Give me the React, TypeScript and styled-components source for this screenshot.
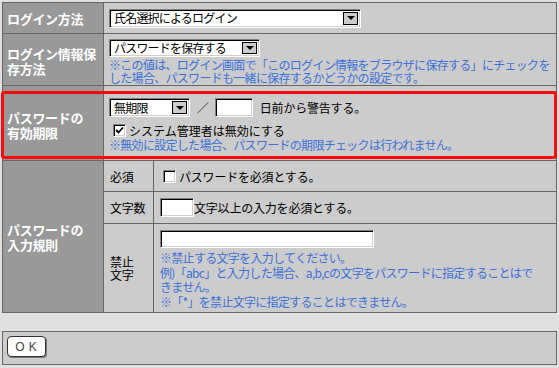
import React from "react";
import styled, { createGlobalStyle } from "styled-components";

const GlobalStyle = createGlobalStyle`
  html, body {
    margin: 0;
    padding: 0;
    background: #e0e0e0;
  }
  body {
    font-family: "Noto Sans CJK JP", "Liberation Sans", sans-serif;
    font-size: 12px;
    color: #000;
  }
`;

const Page = styled.div`
  position: relative;
  width: 555px;
  padding: 2px 2px 0 2px;
`;

const SettingsTable = styled.div`
  display: grid;
  grid-template-columns: 100px 49px 1fr;
  grid-template-rows: 30px 51px 74px 30px 31px 88px;
  gap: 1px;
  padding: 1px;
  background: #666666;
`;

const HeaderCell = styled.div<{ $rows?: number; $shift?: number }>`
  grid-column: 1;
  grid-row: span ${(p) => p.$rows ?? 1};
  display: flex;
  align-items: center;
  padding: ${(p) => p.$shift ?? 0}px 0 0 4px;
  background: #999999;
  color: #ffffff;
  font-weight: bold;
  font-size: 13px;
  line-height: 15px;
  letter-spacing: -0.3px;
  white-space: nowrap;
`;

const BodyCell = styled.div<{ $wide?: boolean; $top?: number }>`
  grid-column: ${(p) => (p.$wide ? "2 / span 2" : "3")};
  display: flex;
  flex-direction: column;
  justify-content: ${(p) => (p.$top !== undefined ? "flex-start" : "center")};
  align-items: flex-start;
  padding: ${(p) => p.$top ?? 0}px ${(p) => (p.$wide ? "5px" : "6px")} 0;
  background: #cccccc;
  line-height: 15px;
  white-space: nowrap;
`;

const SubLabelCell = styled.div`
  grid-column: 2;
  display: flex;
  align-items: center;
  padding-left: 6px;
  background: #cccccc;
  line-height: 13px;
  letter-spacing: -0.2px;
`;

const Line = styled.div`
  display: flex;
  align-items: center;
  letter-spacing: -0.2px;
`;

const Note = styled.div<{ $lh?: number; $mt?: number }>`
  margin-top: ${(p) => p.$mt ?? 0}px;
  color: #3c70d8;
  line-height: ${(p) => p.$lh ?? 14}px;
  letter-spacing: -0.7px;
`;

const SelectBox = styled.div<{ $width: number; $height?: number }>`
  display: flex;
  align-items: center;
  box-sizing: border-box;
  width: ${(p) => p.$width}px;
  height: ${(p) => p.$height ?? 19}px;
  flex-shrink: 0;
  background: #ffffff;
  border: 1px solid;
  border-color: #808080 #ffffff #ffffff #808080;
  box-shadow: inset 1px 1px 0 #000000, inset -1px -1px 0 #d4d0c8;
  padding: 2px 2px 2px 4px;
  letter-spacing: -0.8px;
  line-height: 14px;
`;

const SelectLabel = styled.span`
  flex: 1;
`;

const ArrowButton = styled.span`
  display: flex;
  align-items: center;
  justify-content: center;
  box-sizing: border-box;
  width: 15px;
  height: 100%;
  background: #cccccc;
  border: 1px solid;
  border-color: #ffffff #404040 #404040 #ffffff;
  outline: 1px solid #000;
  outline-offset: -1px;

  &::after {
    content: "";
    border-left: 4px solid transparent;
    border-right: 4px solid transparent;
    border-top: 4px solid #000;
  }
`;

const TextBox = styled.div<{ $width: number; $height?: number }>`
  box-sizing: border-box;
  width: ${(p) => p.$width}px;
  height: ${(p) => p.$height ?? 19}px;
  background: #ffffff;
  border: 1px solid;
  border-color: #808080 #ffffff #ffffff #808080;
  box-shadow: inset 1px 1px 0 #000000, inset -1px -1px 0 #d4d0c8;
  flex-shrink: 0;
`;

const Slash = styled.span`
  margin: 0 6px 0 7px;
  color: #333;
`;

const Suffix = styled.span`
  margin-left: 7px;
`;

const CheckLine = styled(Line)`
  margin-top: 6px;
  letter-spacing: 0;
`;

const CheckBox = styled.span<{ $offset?: number }>`
  display: inline-flex;
  align-items: center;
  justify-content: center;
  box-sizing: border-box;
  width: 13px;
  height: 13px;
  margin: 0 3px 0 ${(p) => p.$offset ?? 4}px;
  background: #ffffff;
  border: 1px solid;
  border-color: #808080 #ffffff #ffffff #808080;
  box-shadow: inset 1px 1px 0 #000000, inset -1px -1px 0 #d4d0c8;
  flex-shrink: 0;
`;

const RedFrame = styled.div`
  position: absolute;
  left: 1px;
  top: 91px;
  width: 550px;
  height: 62px;
  border: 3px solid #ff0a0a;
  border-radius: 3px;
  pointer-events: none;
`;

const ActionPanel = styled.div`
  margin-top: 18px;
  padding: 4px 0 0 4px;
  box-sizing: border-box;
  height: 34px;
  background: #cccccc;
  border: 1px solid #666666;
`;

const OkButton = styled.button`
  display: flex;
  align-items: center;
  justify-content: center;
  width: 39px;
  height: 21px;
  padding: 0 0 0 3px;
  background: #ffffff;
  border: 1px solid #333333;
  border-radius: 4px;
  box-shadow: 1px 1px 0 #777777;
  font-family: "Liberation Sans", sans-serif;
  font-size: 12px;
  letter-spacing: 4px;
  color: #444444;
`;

const Check = () => (
  <svg width="9" height="9" viewBox="0 0 9 9">
    <path d="M1 4 L3.5 6.5 L8 1.5" fill="none" stroke="#000" strokeWidth="1.8" />
  </svg>
);

const App = () => {
  return (
    <>
      <GlobalStyle />
      <Page>
        <SettingsTable>
          <HeaderCell>ログイン方法</HeaderCell>
          <BodyCell $wide>
            <SelectBox $width={252}>
              <SelectLabel>氏名選択によるログイン</SelectLabel>
              <ArrowButton />
            </SelectBox>
          </BodyCell>

          <HeaderCell $shift={3}>
            ログイン情報保
            <br />
            存方法
          </HeaderCell>
          <BodyCell $wide $top={5}>
            <SelectBox $width={151} $height={18}>
              <SelectLabel>パスワードを保存する</SelectLabel>
              <ArrowButton />
            </SelectBox>
            <Note $lh={13} $mt={1}>
              ※この値は、ログイン画面で「このログイン情報をブラウザに保存する」にチェックを
              <br />
              した場合、パスワードも一緒に保存するかどうかの設定です。
            </Note>
          </BodyCell>

          <HeaderCell $shift={3}>
            パスワードの
            <br />
            有効期限
          </HeaderCell>
          <BodyCell $wide $top={12}>
            <Line>
              <SelectBox $width={81}>
                <SelectLabel>無期限</SelectLabel>
                <ArrowButton />
              </SelectBox>
              <Slash>／</Slash>
              <TextBox $width={38} />
              <Suffix>日前から警告する。</Suffix>
            </Line>
            <CheckLine>
              <CheckBox>
                <Check />
              </CheckBox>
              システム管理者は無効にする
            </CheckLine>
            <Note>※無効に設定した場合、パスワードの期限チェックは行われません。</Note>
          </BodyCell>

          <HeaderCell $rows={3}>
            パスワードの
            <br />
            入力規則
          </HeaderCell>
          <SubLabelCell>必須</SubLabelCell>
          <BodyCell>
            <Line>
              <CheckBox $offset={3} />
              パスワードを必須とする。
            </Line>
          </BodyCell>

          <SubLabelCell>文字数</SubLabelCell>
          <BodyCell>
            <Line>
              <TextBox $width={34} />
              <span>文字以上の入力を必須とする。</span>
            </Line>
          </BodyCell>

          <SubLabelCell>
            禁止
            <br />
            文字
          </SubLabelCell>
          <BodyCell $top={6}>
            <TextBox $width={214} $height={18} />
            <Note $lh={14.5} $mt={3}>
              ※禁止する文字を入力してください。
              <br />
              例)「abc」と入力した場合、a,b,cの文字をパスワードに指定することはで
              <br />
              きません。
              <br />
              ※「*」を禁止文字に指定することはできません。
            </Note>
          </BodyCell>
        </SettingsTable>

        <ActionPanel>
          <OkButton>OK</OkButton>
        </ActionPanel>

        <RedFrame />
      </Page>
    </>
  );
};

export default App;
